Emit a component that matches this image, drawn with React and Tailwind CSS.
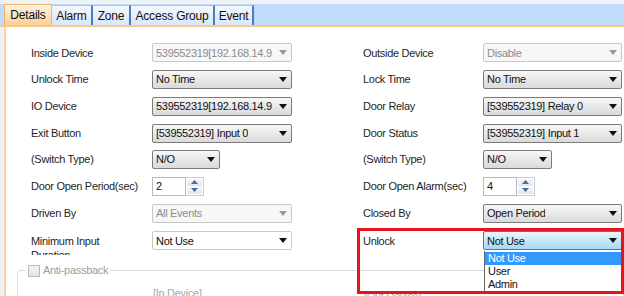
import React from "react";

const Arrow = ({ color = "#111" }) => (
  <svg width="8" height="5" viewBox="0 0 8 5" className="shrink-0">
    <path d="M0 0h8L4 5z" fill={color} />
  </svg>
);

const selectStyles = {
  normal: "border-[#7b7b7b] bg-linear-to-b from-[#f7f7f7] to-[#dadada] text-[#111]",
  disabled: "border-[#c8c8c8] bg-[#f7f7f7] text-[#8c8c8c]",
  plain: "border-[#cacaca] bg-white text-[#111]",
  focus: "border-[#3c7fb1] bg-linear-to-b from-[#eaf6fd] to-[#a6d8f4] text-[#111]",
};

const Select = ({ value, width = "w-[140px]", variant = "normal" }) => (
  <div
    className={`${width} h-[19px] flex items-center justify-between border rounded-[2px] pl-[3px] pr-[4px] ${selectStyles[variant]}`}
  >
    <span className="whitespace-nowrap overflow-hidden">{value}</span>
    <Arrow color={variant === "disabled" ? "#9a9a9a" : "#111"} />
  </div>
);

const Spinner = ({ value }) => (
  <div className="flex h-[19px]">
    <div className="w-[34px] border border-[#b8bbc0] bg-white pl-[3px] flex items-center text-[#111]">
      {value}
    </div>
    <div className="w-[18px] flex flex-col border border-l-0 border-[#c6ced8] bg-white p-[1px] gap-[1px]">
      <div className="flex-1 flex items-center justify-center bg-linear-to-b from-[#f4f7fb] to-[#dfe7f1]">
        <svg width="7" height="4" viewBox="0 0 7 4">
          <path d="M0 4h7L3.5 0z" fill="#4b6d98" />
        </svg>
      </div>
      <div className="flex-1 flex items-center justify-center bg-linear-to-b from-[#f4f7fb] to-[#dfe7f1]">
        <svg width="7" height="4" viewBox="0 0 7 4">
          <path d="M0 0h7L3.5 4z" fill="#4b6d98" />
        </svg>
      </div>
    </div>
  </div>
);

const rows = [
  ["Inside Device", <Select value="539552319[192.168.14.9" variant="disabled" />, "Outside Device", <Select value="Disable" width="w-[139px]" variant="disabled" />],
  ["Unlock Time", <Select value="No Time" />, "Lock Time", <Select value="No Time" width="w-[139px]" />],
  ["IO Device", <Select value="539552319[192.168.14.9" />, "Door Relay", <Select value="[539552319] Relay 0" width="w-[139px]" />],
  ["Exit Button", <Select value="[539552319] Input 0" />, "Door Status", <Select value="[539552319] Input 1" width="w-[139px]" />],
  ["(Switch Type)", <Select value="N/O" width="w-[68px]" />, "(Switch Type)", <Select value="N/O" width="w-[69px]" />],
  ["Door Open Period(sec)", <Spinner value="2" />, "Door Open Alarm(sec)", <Spinner value="4" />],
  ["Driven By", <Select value="All Events" variant="disabled" />, "Closed By", <Select value="Open Period" width="w-[139px]" />],
];

const tabs = [
  ["Details", "w-[48px]"],
  ["Alarm", "w-[41px]"],
  ["Zone", "w-[38px]"],
  ["Access Group", "w-[84px]"],
  ["Event", "w-[39px]"],
];

export default function App() {
  return (
    <div className="relative w-[624px] h-[296px] overflow-hidden bg-[#eef2f5] font-['Liberation_Sans',Arial,sans-serif] text-[11px] tracking-[-0.3px] text-[#1e1e1e]">
      <div className="h-[4px]" />
      {/* tab strip */}
      <div className="flex h-[23px] pl-[4px] bg-[#c0dcfa] border-b-2 border-[#f6c98f]">
        {tabs.map(([name, w], i) =>
          i === 0 ? (
            <div
              key={name}
              className={`${w} flex items-center justify-center text-[12px] tracking-[-0.2px] text-[#111] bg-linear-to-b from-[#fff3e3] to-[#fbcf95] border-x border-t border-[#efb46a]`}
            >
              {name}
            </div>
          ) : (
            <div
              key={name}
              className={`${w} mt-[1px] flex items-center justify-center text-[12px] tracking-[-0.2px] text-[#111] bg-linear-to-b from-[#f4f8fe] to-[#d8e7f9] border-t border-[#a9c5ea] border-r-2 border-r-[#4a7cc2]`}
            >
              {name}
            </div>
          )
        )}
      </div>

      {/* panel */}
      <div className="ml-[4px] h-full border-l-2 border-[#f8d3a5] bg-white">
        <div className="pt-[12.6px] pl-[25px]">
          {rows.map(([l1, c1, l2, c2], i) => (
            <div key={i} className="flex items-center h-[26.7px]">
              <div className="w-[332px] flex items-center">
                <div className="w-[121px] whitespace-nowrap">{l1}</div>
                {c1}
              </div>
              <div className="flex items-center">
                <div className="w-[120px] whitespace-nowrap">{l2}</div>
                {c2}
              </div>
            </div>
          ))}
          <div className="flex items-start h-[26.7px]">
            <div className="w-[332px] flex items-start">
              <div className="w-[121px] mt-[8px] h-[21px] overflow-hidden leading-[14px]">
                Minimum Input
                <br />
                Duration
              </div>
              <div className="mt-[5px]">
                <Select value="Not Use" variant="plain" />
              </div>
            </div>
            <div className="flex items-start">
              <div className="w-[120px] mt-[8px] leading-[14px]">Unlock</div>
              <div className="mt-[5px]">
                <Select value="Not Use" width="w-[139px]" variant="focus" />
              </div>
            </div>
          </div>
        </div>

        {/* anti-passback group */}
        <fieldset className="ml-[11px] mt-[11px] h-[60px] border border-[#d6dee4] rounded-[3px]">
          <legend className="ml-[8px] px-[2px] flex items-center gap-[3px] text-[#9c9c9c] leading-[13px]">
            <span className="w-[12px] h-[12px] border border-[#b9b9b9] bg-linear-to-b from-[#f4f4f4] to-[#e2e2e2]" />
            Anti-passback
          </legend>
          <div className="flex pt-[8px] text-[#a8a8a8]">
            <div className="ml-[135px] w-[211px]">[In Device]</div>
            <div className="mt-[3px]">[Out Device]</div>
          </div>
        </fieldset>
      </div>

      {/* open dropdown list */}
      <div className="absolute left-[484px] top-[251px] w-[138px] bg-white border border-t-0 border-[#646464] pt-[1px]">
        <div className="h-[13px] leading-[13px] pl-[3px] bg-[#3399ff] text-white">Not Use</div>
        <div className="h-[13px] leading-[13px] pl-[3px] text-[#111]">User</div>
        <div className="h-[13px] leading-[13px] pl-[3px] text-[#111]">Admin</div>
      </div>

      {/* red highlight annotation */}
      <div className="absolute left-[357px] top-[228px] w-[267px] h-[66px] border-[3px] border-[#e8141d]" />
    </div>
  );
}
